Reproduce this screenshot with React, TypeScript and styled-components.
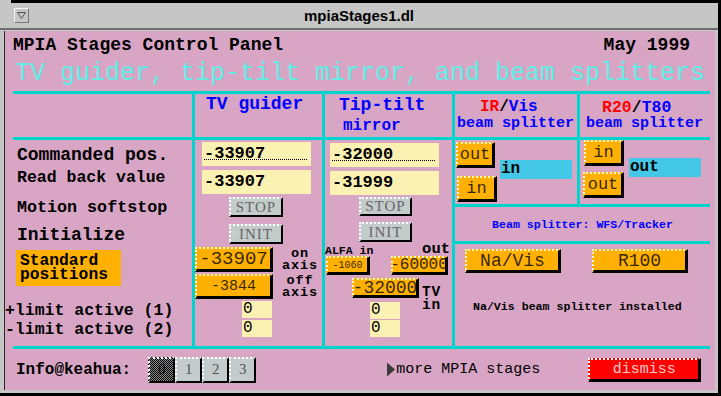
import React from 'react'
import styled, { createGlobalStyle } from 'styled-components'

const MONO = `'Liberation Mono', 'DejaVu Sans Mono', monospace`
const SERIF = `'Liberation Serif', 'DejaVu Serif', serif`

const PINK = '#d8a5c5'
const CYAN = '#00d4cc'
const ORANGE = '#ffb000'
const PALE = '#fbf1b3'
const GREY = '#c3cbcb'
const BLUE = '#0000ff'
const RED = '#ff0000'

type Off = { $mt?: number; $ml?: number }
const offset = ({ $mt = 0, $ml = 0 }: Off) => `margin-top: ${$mt}px; margin-left: ${$ml}px;`

const GlobalStyle = createGlobalStyle`
  html, body { margin: 0; padding: 0; background: #000; }
  body { font-family: ${MONO}; color: #000; }
`

const Screen = styled.div`
  width: 721px;
  height: 396px;
  background: #000;
  overflow: hidden;
`

const Window = styled.div`
  position: relative;
  width: 718px;
  height: 393px;
  box-sizing: border-box;
  border-top: 3px solid #000;
  background: #c6c6c6;
  display: flex;
  flex-direction: column;
  &::before {
    content: '';
    position: absolute;
    top: -3px;
    left: 0;
    width: 11px;
    height: 3px;
    background: #c6c6c6;
  }
`

const TitleBar = styled.div`
  height: 25px;
  display: flex;
  align-items: center;
  padding-left: 14px;
  border-bottom: 2px solid #6e6e6e;
`

const MenuButton = styled.div`
  width: 15px;
  height: 15px;
  box-sizing: border-box;
  border: 1px solid;
  border-color: #f6f6f6 #7a7a7a #7a7a7a #f6f6f6;
  display: flex;
  align-items: center;
  justify-content: center;
`

const WindowTitle = styled.div`
  flex: 1;
  margin-right: 29px;
  text-align: center;
  font: bold 15px 'Liberation Sans', Arial, sans-serif;
`

const Body = styled.div`
  flex: 1;
  display: flex;
  padding: 1px 3px 3px 5px;
`

const Panel = styled.div`
  width: 710px;
  height: 359px;
  background: ${PINK};
  display: flex;
  flex-direction: column;
  box-shadow: -1px 0 0 #2a2a2a;
`

const TopRow = styled.div`
  height: 28px;
  display: flex;
  align-items: center;
  justify-content: space-between;
  padding: 0 25px 0 8px;
  font: bold 18px ${MONO};
`

const Subtitle = styled.div`
  height: 28px;
  line-height: 28px;
  padding-left: 10px;
  font: 25px ${MONO};
  color: #60eee6;
  white-space: nowrap;
`

const Grid = styled.div`
  margin: 4px 0 0 8px;
  width: 697px;
  box-sizing: border-box;
  padding: 3px 0;
  background: ${CYAN};
  display: grid;
  grid-template-columns: 179px 127px 127px 255px;
  grid-template-rows: 43px 206px;
  gap: 3px;
`

const Cell = styled.div<{ $dir?: 'row' | 'column' }>`
  background: ${PINK};
  display: flex;
  flex-direction: ${(p) => p.$dir ?? 'column'};
  align-items: flex-start;
`

const Splitters = styled.div`
  grid-column: 4;
  grid-row: 1 / span 2;
  display: grid;
  grid-template-columns: 122px 130px;
  grid-template-rows: 43px 64px 34px 102px;
  gap: 3px;
  background: ${CYAN};
`

const BeamCell = styled(Cell)`
  grid-column: 1 / span 2;
  align-items: center;
  justify-content: center;
  font: bold 11.6px ${MONO};
  color: ${BLUE};
`

const WideCell = styled(Cell)`
  grid-column: 1 / span 2;
`

const HeadLine = styled.div<Off & { $fs: number; $h: number }>`
  ${offset}
  height: ${(p) => p.$h}px;
  line-height: ${(p) => p.$h}px;
  font: bold ${(p) => p.$fs}px ${MONO};
  color: ${BLUE};
  white-space: nowrap;
`

const Red = styled.span`
  color: ${RED};
`

const Slash = styled.span`
  color: #000;
`

const RowLabel = styled.div<Off & { $fs: number; $h: number }>`
  ${offset}
  height: ${(p) => p.$h}px;
  line-height: ${(p) => p.$h}px;
  font: bold ${(p) => p.$fs}px ${MONO};
  white-space: nowrap;
`

const StdBox = styled.div<Off>`
  ${offset}
  width: 105px;
  height: 36px;
  box-sizing: border-box;
  padding: 4px 0 0 4px;
  background: ${ORANGE};
  font: bold 16.3px/14px ${MONO};
`

const ValueField = styled.div<Off & { $focus?: boolean }>`
  ${offset}
  width: 109px;
  height: 24px;
  box-sizing: border-box;
  padding-left: 2px;
  background-color: ${PALE};
  font: bold 17px/24px ${MONO};
  ${(p) =>
    p.$focus &&
    `background-image: repeating-linear-gradient(90deg, #000 0 1px, transparent 1px 2px);
     background-size: 104px 1px;
     background-position: 2px 17px;
     background-repeat: no-repeat;`}
`

const SoftButton = styled.div<Off & { $w: number; $h: number }>`
  ${offset}
  width: ${(p) => p.$w}px;
  height: ${(p) => p.$h}px;
  box-sizing: border-box;
  background: ${GREY};
  border-style: dotted solid solid dotted;
  border-width: 2px;
  border-color: #fff #000 #000 #fff;
  display: flex;
  align-items: center;
  justify-content: center;
  font: 15px ${SERIF};
  letter-spacing: 1px;
  color: #666;
`

const PushButton = styled.div<Off & { $w: number; $h: number; $fs: number }>`
  ${offset}
  flex-shrink: 0;
  width: ${(p) => p.$w}px;
  height: ${(p) => p.$h}px;
  box-sizing: border-box;
  background: ${ORANGE};
  border-style: dotted solid solid dotted;
  border-width: 2px 3px 3px 2px;
  border-color: #fff6d0 #000 #000 #fff6d0;
  display: flex;
  align-items: center;
  justify-content: center;
  font: ${(p) => p.$fs}px ${MONO};
  color: rgba(0, 0, 0, 0.8);
  white-space: nowrap;
`

const StdRow = styled.div<Off>`
  ${offset}
  display: flex;
  align-items: center;
`

const AxisLabel = styled.div<Off>`
  ${offset}
  width: 36px;
  text-align: center;
  font: bold 13.5px/12px ${MONO};
  letter-spacing: 0.9px;
`

const ZeroField = styled.div<Off>`
  ${offset}
  width: 30px;
  height: 17px;
  box-sizing: border-box;
  padding-left: 1px;
  background: ${PALE};
  font: 16px/17px ${MONO};
`

const AlfaRow = styled.div<Off>`
  ${offset}
  align-self: stretch;
  height: 13px;
  padding-right: 2px;
  display: flex;
  justify-content: space-between;
  align-items: flex-end;
  font-weight: bold;
  white-space: nowrap;
`

const AlfaIn = styled.span`
  font-size: 11.5px;
  line-height: 11px;
`

const AlfaOut = styled.span`
  font-size: 15.5px;
  line-height: 13px;
`

const TvRow = styled.div<Off>`
  ${offset}
  height: 20px;
  display: flex;
  align-items: flex-start;
`

const TvLabel = styled.div<Off>`
  ${offset}
  font: bold 14.5px/13px ${MONO};
  letter-spacing: 0.8px;
`

const BtnCol = styled.div<Off & { $gap: number }>`
  ${offset}
  width: 41px;
  display: flex;
  flex-direction: column;
  align-items: flex-start;
  gap: ${(p) => p.$gap}px;
`

const StateField = styled.div<Off>`
  ${offset}
  width: 72px;
  height: 19px;
  box-sizing: border-box;
  padding-left: 1px;
  background: #44c8e8;
  font: bold 16px/19px ${MONO};
`

const Installed = styled.div<Off>`
  ${offset}
  font: bold 11.6px/14px ${MONO};
  white-space: nowrap;
`

const BottomBar = styled.div`
  flex: 1;
  display: flex;
  align-items: center;
  padding-left: 11px;
`

const InfoLabel = styled.div`
  font: bold 16px ${MONO};
`

const PageGroup = styled.div`
  margin-left: 17px;
  display: flex;
`

const PageButton = styled.div<{ $on?: boolean }>`
  width: 27px;
  height: 26px;
  box-sizing: border-box;
  border-style: dotted solid solid dotted;
  border-width: 2px;
  border-color: #fff #000 #000 #fff;
  background: ${(p) =>
    p.$on ? 'repeating-conic-gradient(#000 0 25%, #8a8a8a 0 50%) 0 0 / 2px 2px' : GREY};
  display: flex;
  align-items: center;
  justify-content: center;
  font: 15px ${SERIF};
  color: ${(p) => (p.$on ? '#000' : '#555')};
`

const MoreLink = styled.div`
  margin-left: 130px;
  display: flex;
  align-items: center;
  font: 15px ${MONO};
  white-space: nowrap;
`

const Dismiss = styled.div`
  margin-left: 48px;
  width: 113px;
  height: 24px;
  box-sizing: border-box;
  background: ${RED};
  border-style: dotted solid solid dotted;
  border-width: 2px 3px 3px 2px;
  border-color: #fff #000 #000 #fff;
  display: flex;
  align-items: center;
  justify-content: center;
  font: 15px ${MONO};
  color: rgba(255, 255, 255, 0.8);
`

export default function App() {
  return (
    <Screen>
      <GlobalStyle />
      <Window>
        <TitleBar>
          <MenuButton>
            <svg width="9" height="7" viewBox="0 0 9 7">
              <path d="M0.5 0.5 H8.5 L4.5 6.5 Z" fill="none" stroke="#555" />
            </svg>
          </MenuButton>
          <WindowTitle>mpiaStages1.dl</WindowTitle>
        </TitleBar>
        <Body>
          <Panel>
            <TopRow>
              <span>MPIA Stages Control Panel</span>
              <span>May 1999</span>
            </TopRow>
            <Subtitle>TV guider, tip-tilt mirror, and beam splitters</Subtitle>
            <Grid>
              <Cell />
              <Cell>
                <HeadLine $ml={11} $fs={18} $h={18}>TV guider</HeadLine>
              </Cell>
              <Cell>
                <HeadLine $ml={14} $mt={1} $fs={18} $h={18}>Tip-tilt</HeadLine>
                <HeadLine $ml={18} $mt={4} $fs={16} $h={16}>mirror</HeadLine>
              </Cell>
              <Splitters>
                <Cell>
                  <HeadLine $ml={25} $mt={4} $fs={16} $h={16}>
                    <Red>IR</Red><Slash>/</Slash>Vis
                  </HeadLine>
                  <HeadLine $ml={2} $mt={1} $fs={15} $h={15}>beam splitter</HeadLine>
                </Cell>
                <Cell>
                  <HeadLine $ml={22} $mt={4} $fs={16.5} $h={16}>
                    <Red>R20</Red><Slash>/</Slash>T80
                  </HeadLine>
                  <HeadLine $ml={6} $mt={1} $fs={15} $h={15}>beam splitter</HeadLine>
                </Cell>
                <Cell $dir="row">
                  <BtnCol $ml={1} $mt={2} $gap={8}>
                    <PushButton $w={39} $h={26} $fs={17}>out</PushButton>
                    <PushButton $ml={1} $w={40} $h={26} $fs={17}>in</PushButton>
                  </BtnCol>
                  <StateField $ml={3} $mt={20}>in</StateField>
                </Cell>
                <Cell $dir="row">
                  <BtnCol $ml={3} $gap={6}>
                    <PushButton $ml={1} $w={40} $h={26} $fs={17}>in</PushButton>
                    <PushButton $w={41} $h={26} $fs={17}>out</PushButton>
                  </BtnCol>
                  <StateField $ml={5} $mt={18}>out</StateField>
                </Cell>
                <BeamCell>Beam splitter: WFS/Tracker</BeamCell>
                <WideCell>
                  <StdRow $mt={5} $ml={10}>
                    <PushButton $w={96} $h={24} $fs={18}>Na/Vis</PushButton>
                    <PushButton $ml={31} $w={96} $h={24} $fs={18}>R100</PushButton>
                  </StdRow>
                  <Installed $mt={27} $ml={18}>Na/Vis beam splitter installed</Installed>
                </WideCell>
              </Splitters>

              <Cell>
                <RowLabel $ml={4} $mt={5} $fs={18} $h={22}>Commanded pos.</RowLabel>
                <RowLabel $ml={4} $mt={1} $fs={16.5} $h={22}>Read back value</RowLabel>
                <RowLabel $ml={4} $mt={8} $fs={16.7} $h={22}>Motion softstop</RowLabel>
                <RowLabel $ml={4} $mt={5} $fs={18} $h={22}>Initialize</RowLabel>
                <StdBox $ml={3} $mt={3}>
                  Standard
                  <br />
                  positions
                </StdBox>
                <RowLabel $ml={-8} $mt={15} $fs={16.5} $h={18}>+limit active (1)</RowLabel>
                <RowLabel $ml={-8} $mt={1} $fs={16.5} $h={18}>-limit active (2)</RowLabel>
              </Cell>

              <Cell>
                <ValueField $ml={7} $mt={2} $focus>-33907</ValueField>
                <ValueField $ml={7} $mt={4}>-33907</ValueField>
                <SoftButton $ml={34} $mt={3} $w={54} $h={20}>STOP</SoftButton>
                <SoftButton $ml={34} $mt={7} $w={54} $h={20}>INIT</SoftButton>
                <StdRow $mt={3}>
                  <PushButton $w={78} $h={25} $fs={19}>-33907</PushButton>
                  <AxisLabel $ml={9}>
                    on
                    <br />
                    axis
                  </AxisLabel>
                </StdRow>
                <StdRow $mt={2}>
                  <PushButton $w={78} $h={25} $fs={15}>-3844</PushButton>
                  <AxisLabel $ml={9}>
                    off
                    <br />
                    axis
                  </AxisLabel>
                </StdRow>
                <ZeroField $ml={47} $mt={2}>0</ZeroField>
                <ZeroField $ml={47} $mt={2}>0</ZeroField>
              </Cell>

              <Cell>
                <ValueField $ml={5} $mt={3} $focus>-32000</ValueField>
                <ValueField $ml={5} $mt={4}>-31999</ValueField>
                <SoftButton $ml={34} $mt={2} $w={53} $h={19}>STOP</SoftButton>
                <SoftButton $ml={34} $mt={6} $w={53} $h={20}>INIT</SoftButton>
                <AlfaRow $mt={1}>
                  <AlfaIn>ALFA in</AlfaIn>
                  <AlfaOut>out</AlfaOut>
                </AlfaRow>
                <StdRow>
                  <PushButton $ml={1} $w={44} $h={19} $fs={10}>-1060</PushButton>
                  <PushButton $ml={21} $w={57} $h={19} $fs={16}>-60000</PushButton>
                </StdRow>
                <TvRow $mt={3}>
                  <PushButton $ml={27} $w={67} $h={20} $fs={18}>-32000</PushButton>
                  <TvLabel $ml={3} $mt={8}>
                    TV
                    <br />
                    in
                  </TvLabel>
                </TvRow>
                <ZeroField $ml={45} $mt={4}>0</ZeroField>
                <ZeroField $ml={45} $mt={1}>0</ZeroField>
              </Cell>
            </Grid>
            <BottomBar>
              <InfoLabel>Info@keahua:</InfoLabel>
              <PageGroup>
                <PageButton $on>0</PageButton>
                <PageButton>1</PageButton>
                <PageButton>2</PageButton>
                <PageButton>3</PageButton>
              </PageGroup>
              <MoreLink>
                <svg width="10" height="15" viewBox="0 0 10 15">
                  <path d="M1 0.5 L9 7.5 L1 14.5 Z" fill="#3a3a3a" />
                </svg>
                more MPIA stages
              </MoreLink>
              <Dismiss>dismiss</Dismiss>
            </BottomBar>
          </Panel>
        </Body>
      </Window>
    </Screen>
  )
}
